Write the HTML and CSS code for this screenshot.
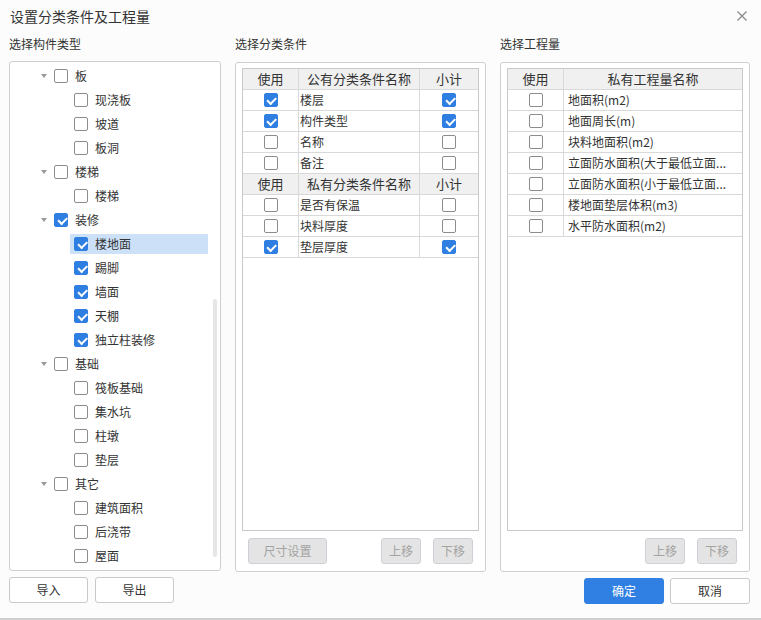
FILE: index.html
```html
<!DOCTYPE html>
<html lang="zh-CN">
<head>
<meta charset="utf-8">
<title>设置分类条件及工程量</title>
<link rel="stylesheet" href="styles.css">
</head>
<body>
<div class="dialog">
  <div class="titlebar">
    <span class="title">设置分类条件及工程量</span>
    <svg class="close" width="10" height="10" viewBox="0 0 10 10"><path d="M0.5 0.5 L9.5 9.5 M9.5 0.5 L0.5 9.5" stroke="#8a8a8a" stroke-width="1.3" fill="none"/></svg>
  </div>
  <div class="main">
    <div class="col col-left">
      <div class="label">选择构件类型</div>
      <div class="panel tree">
        <div class="row"><div class="node l1"><span class="tri"></span><span class="cb"></span><span class="txt">板</span></div></div>
        <div class="row"><div class="node l2"><span class="cb"></span><span class="txt">现浇板</span></div></div>
        <div class="row"><div class="node l2"><span class="cb"></span><span class="txt">坡道</span></div></div>
        <div class="row"><div class="node l2"><span class="cb"></span><span class="txt">板洞</span></div></div>
        <div class="row"><div class="node l1"><span class="tri"></span><span class="cb"></span><span class="txt">楼梯</span></div></div>
        <div class="row"><div class="node l2"><span class="cb"></span><span class="txt">楼梯</span></div></div>
        <div class="row"><div class="node l1"><span class="tri"></span><span class="cb on"></span><span class="txt">装修</span></div></div>
        <div class="row"><div class="node l2 sel"><span class="cb on"></span><span class="txt">楼地面</span></div></div>
        <div class="row"><div class="node l2"><span class="cb on"></span><span class="txt">踢脚</span></div></div>
        <div class="row"><div class="node l2"><span class="cb on"></span><span class="txt">墙面</span></div></div>
        <div class="row"><div class="node l2"><span class="cb on"></span><span class="txt">天棚</span></div></div>
        <div class="row"><div class="node l2"><span class="cb on"></span><span class="txt">独立柱装修</span></div></div>
        <div class="row"><div class="node l1"><span class="tri"></span><span class="cb"></span><span class="txt">基础</span></div></div>
        <div class="row"><div class="node l2"><span class="cb"></span><span class="txt">筏板基础</span></div></div>
        <div class="row"><div class="node l2"><span class="cb"></span><span class="txt">集水坑</span></div></div>
        <div class="row"><div class="node l2"><span class="cb"></span><span class="txt">柱墩</span></div></div>
        <div class="row"><div class="node l2"><span class="cb"></span><span class="txt">垫层</span></div></div>
        <div class="row"><div class="node l1"><span class="tri"></span><span class="cb"></span><span class="txt">其它</span></div></div>
        <div class="row"><div class="node l2"><span class="cb"></span><span class="txt">建筑面积</span></div></div>
        <div class="row"><div class="node l2"><span class="cb"></span><span class="txt">后浇带</span></div></div>
        <div class="row"><div class="node l2"><span class="cb"></span><span class="txt">屋面</span></div></div>
        <div class="scrollbar"></div>
      </div>
      <div class="foot">
        <button class="btn">导入</button>
        <button class="btn">导出</button>
      </div>
    </div>

    <div class="col col-mid">
      <div class="label label-b">选择分类条件</div>
      <div class="panel grid-panel">
        <div class="tbox">
          <div class="tr th three"><div class="c">使用</div><div class="c">公有分类条件名称</div><div class="c last">小计</div></div>
          <div class="tr three"><div class="c ctr"><span class="cb on"></span></div><div class="c name">楼层</div><div class="c ctr last"><span class="cb on"></span></div></div>
          <div class="tr three"><div class="c ctr"><span class="cb on"></span></div><div class="c name">构件类型</div><div class="c ctr last"><span class="cb on"></span></div></div>
          <div class="tr three"><div class="c ctr"><span class="cb"></span></div><div class="c name">名称</div><div class="c ctr last"><span class="cb"></span></div></div>
          <div class="tr three"><div class="c ctr"><span class="cb"></span></div><div class="c name">备注</div><div class="c ctr last"><span class="cb"></span></div></div>
          <div class="tr th three"><div class="c">使用</div><div class="c">私有分类条件名称</div><div class="c last">小计</div></div>
          <div class="tr three"><div class="c ctr"><span class="cb"></span></div><div class="c name">是否有保温</div><div class="c ctr last"><span class="cb"></span></div></div>
          <div class="tr three"><div class="c ctr"><span class="cb"></span></div><div class="c name">块料厚度</div><div class="c ctr last"><span class="cb"></span></div></div>
          <div class="tr three"><div class="c ctr"><span class="cb on"></span></div><div class="c name">垫层厚度</div><div class="c ctr last"><span class="cb on"></span></div></div>
        </div>
        <div class="btnrow">
          <button class="btn dis wide">尺寸设置</button>
          <span class="spacer"></span>
          <button class="btn dis small">上移</button>
          <button class="btn dis small">下移</button>
        </div>
      </div>
      <div class="foot"></div>
    </div>

    <div class="col col-right">
      <div class="label label-b">选择工程量</div>
      <div class="panel grid-panel">
        <div class="tbox">
          <div class="tr th two"><div class="c">使用</div><div class="c last">私有工程量名称</div></div>
          <div class="tr two"><div class="c ctr"><span class="cb"></span></div><div class="c name2 last">地面积(m2)</div></div>
          <div class="tr two"><div class="c ctr"><span class="cb"></span></div><div class="c name2 last">地面周长(m)</div></div>
          <div class="tr two"><div class="c ctr"><span class="cb"></span></div><div class="c name2 last">块料地面积(m2)</div></div>
          <div class="tr two"><div class="c ctr"><span class="cb"></span></div><div class="c name2 last">立面防水面积(大于最低立面...</div></div>
          <div class="tr two"><div class="c ctr"><span class="cb"></span></div><div class="c name2 last">立面防水面积(小于最低立面...</div></div>
          <div class="tr two"><div class="c ctr"><span class="cb"></span></div><div class="c name2 last">楼地面垫层体积(m3)</div></div>
          <div class="tr two"><div class="c ctr"><span class="cb"></span></div><div class="c name2 last">水平防水面积(m2)</div></div>
        </div>
        <div class="btnrow">
          <span class="spacer"></span>
          <button class="btn dis small">上移</button>
          <button class="btn dis small">下移</button>
        </div>
      </div>
      <div class="foot foot-right">
        <button class="btn primary">确定</button>
        <button class="btn cancel">取消</button>
      </div>
    </div>
  </div>
</div>
</body>
</html>
```

FILE: styles.css
```css
* { box-sizing: border-box; }
html, body {
  margin: 0;
  padding: 0;
  background: #fcfcfc;
}
body {
  width: 761px;
  height: 620px;
  overflow: hidden;
  font-family: "Noto Sans CJK SC", "Noto Sans", sans-serif;
  font-size: 12px;
  color: #333;
}
.dialog {
  height: 620px;
  border-bottom: 2px solid #cfcfcf;
  background: #fcfcfc;
}
.titlebar {
  height: 31px;
  display: flex;
  align-items: center;
  justify-content: space-between;
  padding: 0 14px 0 10px;
}
.title {
  font-size: 14px;
  line-height: 20px;
  color: #333;
}
.close { display: block; }

.main {
  display: flex;
  gap: 14px;
  padding-left: 9px;
}
.col { display: flex; flex-direction: column; }
.col-left { width: 212px; }
.col-mid { width: 251px; }
.col-right { width: 250px; }

.label {
  height: 30px;
  padding-top: 3px;
  line-height: 19px;
  font-size: 12px;
  color: #333;
}
.label-b { height: 31px; }

.panel {
  height: 510px;
  border: 1px solid #cfcfcf;
  border-radius: 3px;
  background: #fff;
}

/* tree */
.tree {
  position: relative;
  padding-top: 2px;
}
.row {
  height: 24px;
  display: flex;
  align-items: center;
}
.node {
  display: flex;
  align-items: center;
  height: 20px;
}
.node.l1 { margin-left: 31px; }
.node.l2 { margin-left: 60px; padding-left: 4px; width: 138px; }
.node.sel { background: #cce0f7; }
.tri {
  width: 0;
  height: 0;
  border-left: 3px solid transparent;
  border-right: 3px solid transparent;
  border-top: 4px solid #9a9a9a;
  margin-right: 7px;
}
.txt {
  margin-left: 7px;
  line-height: 20px;
  white-space: nowrap;
}
.scrollbar {
  position: absolute;
  left: 203px;
  top: 237px;
  width: 4px;
  height: 258px;
  border-radius: 2px;
  background: #e6e6e6;
}

/* checkbox */
.cb {
  position: relative;
  display: inline-block;
  flex: none;
  width: 14px;
  height: 14px;
  border: 1px solid #8c8c8c;
  border-radius: 2px;
  background: #fff;
}
.cb.on {
  background: #2f7fe2;
  border-color: #2f7fe2;
}
.cb.on::after {
  content: "";
  position: absolute;
  left: 2.5px;
  top: 3px;
  width: 7px;
  height: 3.5px;
  border-left: 2px solid #fff;
  border-bottom: 2px solid #fff;
  transform: rotate(-45deg);
}

/* tables */
.grid-panel {
  display: flex;
  flex-direction: column;
  padding: 5px 6px 0 6px;
}
.tbox {
  height: 463px;
  border: 1px solid #c9c9c9;
  background: #fff;
}
.tr {
  display: grid;
  height: 21px;
  border-bottom: 1px solid #d9d9d9;
}
.tr.three { grid-template-columns: 56px 121px 1fr; }
.tr.two { grid-template-columns: 56px 1fr; }
.c {
  border-right: 1px solid #d9d9d9;
  display: flex;
  align-items: center;
  line-height: 20px;
  white-space: nowrap;
  overflow: hidden;
}
.c.last { border-right: none; }
.th { background: #f0f0f0; }
.th .c {
  justify-content: center;
  font-size: 13px;
  color: #333;
}
.c.ctr { justify-content: center; }
.c.name { padding-left: 1px; }
.c.name2 { padding-left: 4px; }

/* buttons */
.btnrow {
  display: flex;
  align-items: center;
  margin-top: 7px;
  padding: 0 6px;
  gap: 12px;
}
.spacer { flex: 1; }
.btn {
  height: 26px;
  width: 79px;
  border: 1px solid #c9c9c9;
  border-radius: 3px;
  background: #fff;
  font-family: "Noto Sans CJK SC", "Noto Sans", sans-serif;
  font-size: 12px;
  color: #333;
  padding: 0;
  line-height: 24px;
}
.btn.dis {
  background: #e4e4e4;
  border-color: #cdd1d7;
  color: #a3a3a3;
}
.btn.small { width: 40px; }
.btn.wide { width: 79px; }
.btn.primary {
  width: 80px;
  background: #2f80e2;
  border-color: #2f80e2;
  color: #fff;
}
.btn.cancel { width: 80px; }

.foot {
  height: 26px;
  margin-top: 6px;
  display: flex;
  gap: 7px;
}
.foot-right {
  justify-content: flex-end;
  gap: 6px;
}
```
